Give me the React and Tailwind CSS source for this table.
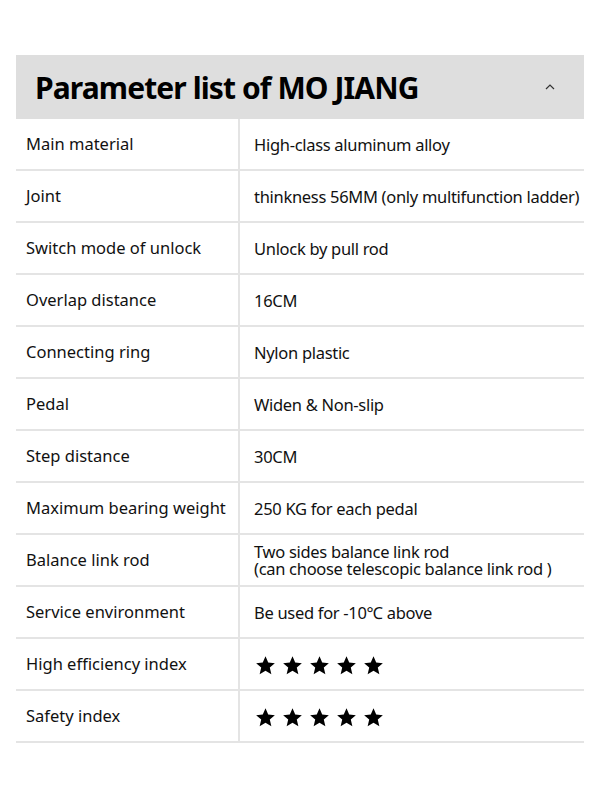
const rows = [
  ["Main material", "High-class aluminum alloy"],
  ["Joint", "thinkness 56MM (only multifunction ladder)"],
  ["Switch mode of unlock", "Unlock by pull rod"],
  ["Overlap distance", "16CM"],
  ["Connecting ring", "Nylon plastic"],
  ["Pedal", "Widen & Non-slip"],
  ["Step distance", "30CM"],
  ["Maximum bearing weight", "250 KG for each pedal"],
  ["Balance link rod", "Two sides balance link rod\n(can choose telescopic balance link rod )"],
  ["Service environment", "Be used for -10℃ above"],
  ["High efficiency index", "stars"],
  ["Safety index", "stars"],
];

const Star = () => (
  <svg className="w-[21px] h-[21px]" viewBox="0 0 24 24" fill="#000">
    <path d="M12 1.5l3.1 7.1 7.6.7-5.8 5.1 1.8 7.6L12 18l-6.7 4 1.8-7.6-5.8-5.1 7.6-.7z" />
  </svg>
);

const App = () => {
  return (
    <div
      className="w-[600px] h-[800px] bg-white pt-[55px] px-4 text-[#111]"
      style={{ fontFamily: '"Noto Sans", Inter, sans-serif' }}
    >
      <div className="bg-[#dedede] h-16 flex items-center justify-between pl-[19px] pr-[28px]">
        <h1 className="text-[30px] font-bold tracking-[-0.9px] text-black">
          Parameter list of MO JIANG
        </h1>
        <svg className="w-3 h-3" viewBox="0 0 12 12" fill="none" stroke="#333" strokeWidth="1.2">
          <path d="M2 8l4-4 4 4" />
        </svg>
      </div>
      <div>
        {rows.map(([label, value]) => (
          <div key={label} className="flex h-[52px] border-b-2 border-[#e4e4e4]">
            <div className="w-[224px] flex items-center pl-[10px] border-r-2 border-[#e4e4e4] text-[16.5px]">
              {label}
            </div>
            <div className="flex-1 flex items-center pl-[14px] text-[16.5px] leading-[17px] tracking-[-0.3px]">
              {value === "stars" ? (
                <div className="flex gap-[6px] pl-[1px] pt-[2px]">
                  <Star />
                  <Star />
                  <Star />
                  <Star />
                  <Star />
                </div>
              ) : (
                <span className="whitespace-pre-line">{value}</span>
              )}
            </div>
          </div>
        ))}
      </div>
    </div>
  );
};

export default App;
